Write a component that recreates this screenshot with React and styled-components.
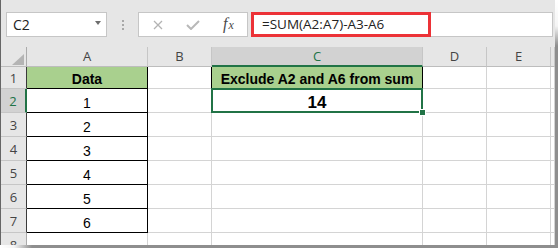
import React from "react";
import styled, { createGlobalStyle } from "styled-components";

const UI_FONT = `"Open Sans", "Noto Sans", sans-serif`;
const CELL_FONT = `"Liberation Sans", Arial, sans-serif`;
const GREEN = "#217346";
const HEAD_BG = "#e6e6e6";
const GRID = "#d4d4d4";

const GlobalStyle = createGlobalStyle`
  html, body { margin: 0; padding: 0; background: #fff; }
  body { font-family: ${CELL_FONT}; }
`;

const columns = ["A", "B", "C", "D", "E", ""];
const values = ["1", "2", "3", "4", "5", "6"];

export default function App() {
	return (
		<>
			<GlobalStyle />
			<Frame>
				<Window>
					<FormulaBar>
						<NameBox>
							<span>C2</span>
							<Caret />
						</NameBox>
						<Grip><Dot /><Dot /><Dot /></Grip>
						<ButtonsBox>
							<svg width="10" height="10" viewBox="0 0 10 10">
								<path d="M1 1L9 9M9 1L1 9" stroke="#b3b3b3" strokeWidth="1.3" fill="none" />
							</svg>
							<svg width="14" height="10" viewBox="0 0 14 10">
								<path d="M1 5L5 9L13 1" stroke="#b8b8b8" strokeWidth="2" fill="none" />
							</svg>
							<Fx>f<small>x</small></Fx>
						</ButtonsBox>
						<FormulaInput>
							<Highlight>=SUM(A2:A7)-A3-A6</Highlight>
						</FormulaInput>
					</FormulaBar>

					<Sheet>
						<Corner>
							<svg width="12" height="11" viewBox="0 0 12 11">
								<polygon points="12,0 12,11 0,11" fill="#b4b4b4" />
							</svg>
						</Corner>
						{columns.map((c, i) => (
							<ColHead key={i} $active={c === "C"}>{c}</ColHead>
						))}

						<RowHead $edge>1</RowHead>
						<Cell $fill $bold $rb $bb>Data</Cell>
						<Cell $rb />
						<Cell $fill $bold $rb $bb>Exclude A2 and A6 from sum</Cell>
						<Cell />
						<Cell />
						<Cell />

						{values.map((v, i) => (
							<React.Fragment key={v}>
								<RowHead $edge $active={i === 0}>{i + 2}</RowHead>
								<Cell $rb $bb>{v}</Cell>
								<Cell />
								{i === 0 ? <Cell $bold $size={17} $selected>14</Cell> : <Cell />}
								<Cell />
								<Cell />
								<Cell />
							</React.Fragment>
						))}

						<RowHead>8</RowHead>
						<Cell />
						<Cell />
						<Cell />
						<Cell />
						<Cell />
						<Cell />
					</Sheet>
				</Window>
				<RightShadow />
				<BottomShadow />
				<CornerShadow />
			</Frame>
		</>
	);
}

const Frame = styled.div`
    width: 558px;
    height: 248px;
    display: grid;
    grid-template-columns: 555px 3px;
    grid-template-rows: 245px 3px;
    background: #fff;
`;

const Window = styled.div`
    display: flex;
    flex-direction: column;
    border-left: 1px solid #666666;
    box-sizing: border-box;
    overflow: hidden;
    background: #fff;
`;

const RightShadow = styled.div`
    background: linear-gradient(to bottom, #fff 0, #f4f4f4 26px, #8e8e8e 46px, #8e8e8e 100%);
`;

const BottomShadow = styled.div`
    background: linear-gradient(to right, #fff 0, #f4f4f4 14px, #8e8e8e 32px, #8e8e8e 100%);
`;

const CornerShadow = styled.div`
    background: #8e8e8e;
`;

const FormulaBar = styled.div`
    height: 47px;
    flex: none;
    box-sizing: border-box;
    padding: 12px 2px 10px 5px;
    display: flex;
    background: ${HEAD_BG};
    font-family: ${UI_FONT};
`;

const NameBox = styled.div`
    width: 101px;
    box-sizing: border-box;
    background: #fff;
    border: 1px solid #c6c6c6;
    display: flex;
    align-items: center;
    justify-content: space-between;
    padding: 0 5px 1px 6px;
    font-size: 14px;
    color: #222;
`;

const Caret = styled.div`
    width: 0;
    height: 0;
    border-left: 3.5px solid transparent;
    border-right: 3.5px solid transparent;
    border-top: 4px solid #6d6d6d;
    margin-bottom: 2px;
`;

const Grip = styled.div`
    width: 31px;
    display: flex;
    flex-direction: column;
    align-items: center;
    justify-content: center;
    gap: 2px;
`;

const Dot = styled.div`
    width: 2px;
    height: 2px;
    background: #a8a8a8;
`;

const ButtonsBox = styled.div`
    width: 110px;
    margin-right: 3px;
    box-sizing: border-box;
    background: #fff;
    border: 1px solid #c6c6c6;
    display: flex;
    align-items: center;
    padding-left: 14px;
    gap: 23px;
`;

const Fx = styled.span`
    font-family: "Liberation Serif", "Times New Roman", serif;
    font-style: italic;
    font-size: 16px;
    color: #4a4a4a;
    line-height: 1;
    margin-bottom: 2px;

    small {
        font-size: 12px;
        margin-left: 1px;
    }
`;

const FormulaInput = styled.div`
    flex: 1;
    box-sizing: border-box;
    background: #fff;
    border: 1px solid #c6c6c6;
    display: flex;
`;

const Highlight = styled.div`
    width: 180px;
    margin: -1px 0 -1px -1px;
    box-sizing: border-box;
    border: 3px solid #ec3237;
    padding: 0 0 1px 8px;
    display: flex;
    align-items: center;
    font-size: 13.5px;
    color: #222;
    white-space: nowrap;
`;

const Sheet = styled.div`
    flex: 1;
    display: grid;
    grid-template-columns: 26px 121px 64px 211px 64px 64px 1fr;
    grid-template-rows: 20px 22px repeat(7, 24px);
    overflow: hidden;
    font-family: ${CELL_FONT};
`;

const Corner = styled.div`
    background: ${HEAD_BG};
    border-right: 1px solid #ababab;
    border-bottom: 1px solid #bdbdbd;
    display: flex;
    align-items: flex-end;
    justify-content: flex-end;
    padding: 0 2px 1px 0;
`;

const ColHead = styled.div`
    background: ${props => props.$active ? "#d2d2d2" : HEAD_BG};
    color: ${props => props.$active ? GREEN : "#444"};
    border-right: 1px solid #c6c6c6;
    border-bottom: ${props => props.$active ? `2px solid ${GREEN}` : "1px solid #bdbdbd"};
    display: flex;
    align-items: flex-end;
    justify-content: center;
    padding-bottom: ${props => props.$active ? "1px" : "2px"};
    font-family: ${UI_FONT};
    font-size: 13px;
    line-height: 16px;
`;

const RowHead = styled.div`
    background: ${props => props.$active ? "#d2d2d2" : HEAD_BG};
    color: ${props => props.$active ? GREEN : "#444"};
    border-right: ${props => props.$active ? `2px solid ${GREEN}` : `1px solid ${props.$edge ? "#3a3a3a" : "#ababab"}`};
    border-bottom: 1px solid #c6c6c6;
    display: flex;
    align-items: center;
    justify-content: center;
    font-family: ${UI_FONT};
    font-size: 13px;
    padding-top: 1px;
`;

const Cell = styled.div`
    position: ${props => props.$selected ? "relative" : "static"};
    background: ${props => props.$fill ? "#a9d08e" : "#fff"};
    border-right: 1px solid ${props => props.$rb ? "#000" : GRID};
    border-bottom: 1px solid ${props => props.$bb ? "#000" : GRID};
    display: flex;
    align-items: flex-end;
    justify-content: center;
    padding-bottom: 1px;
    font-size: ${props => props.$size || 14}px;
    font-weight: ${props => props.$bold ? 700 : 400};
    line-height: 16px;
    color: #000;
    white-space: nowrap;

    &::after {
        content: ${props => props.$selected ? "''" : "none"};
        position: absolute;
        top: -1px;
        left: -1px;
        right: -1px;
        bottom: -1px;
        border: 2px solid ${GREEN};
        z-index: 2;
    }

    &::before {
        content: ${props => props.$selected ? "''" : "none"};
        position: absolute;
        width: 5px;
        height: 5px;
        right: -3px;
        bottom: -3px;
        background: ${GREEN};
        box-shadow: 0 0 0 1px #fff;
        z-index: 3;
    }
`;
